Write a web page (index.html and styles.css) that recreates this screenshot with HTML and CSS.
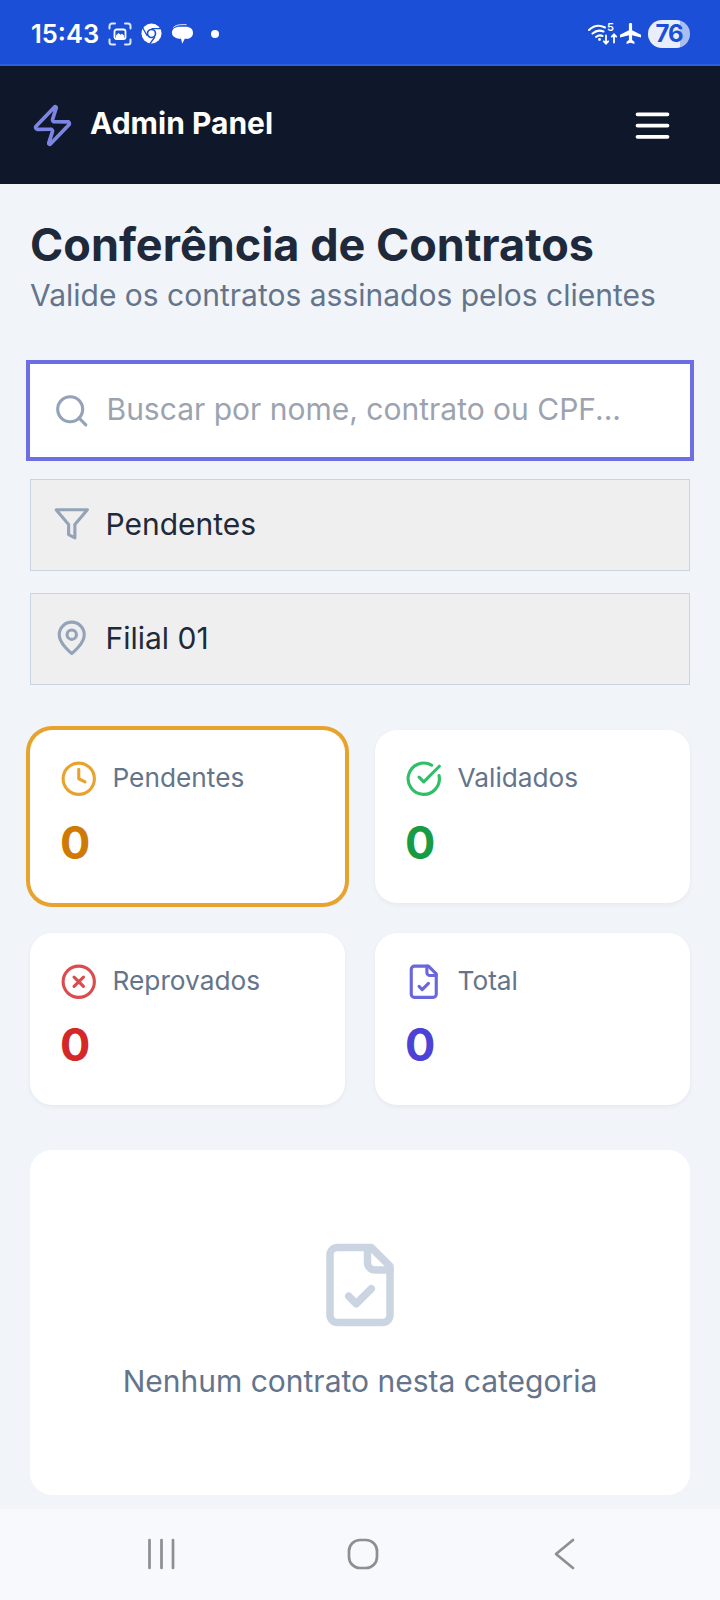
FILE: index.html
```html
<!DOCTYPE html>
<html lang="pt-BR">
<head>
<meta charset="utf-8">
<title>Conferência de Contratos</title>
<link rel="stylesheet" href="styles.css">
</head>
<body>
<div class="app">
  <div class="status">
    <div class="status-left">
      <span class="time">15:43</span>
      <svg class="si-frame" viewBox="0 0 24 24" fill="none" stroke-linecap="round"><path stroke="#dfe7fb" stroke-width="2" d="M1.500 6.500V4a2.500 2.500 0 0 1 2.500-2.500h3M17 1.500h3A2.500 2.500 0 0 1 22.500 4v2.500M22.500 17.500V20a2.500 2.500 0 0 1-2.500 2.500h-3M7 22.500H4A2.500 2.500 0 0 1 1.500 20v-2.500"/><rect x="6.500" y="7.500" width="11" height="9.500" rx="2" stroke="#fff" stroke-width="1.800"/><path fill="#fff" d="M8 16v-2.500l2.500-2.500 2 1.800 1.500-1 2 1.700V16z"/></svg>
      <svg class="si-chrome" viewBox="0 0 24 24" fill="none"><circle cx="12" cy="12" r="11.500" fill="#fff"/><circle cx="12" cy="12" r="5.500" fill="#1c4fd8"/><circle cx="12" cy="12" r="3.600" fill="#fff"/><path d="M12 6.500h10.500M7.200 14.800 2.200 6M15.800 16 10 24" stroke="#1c4fd8" stroke-width="1.500"/></svg>
      <svg class="si-bubble" viewBox="0 0 24 24"><path fill="#fff" d="M9 4h7c4.400 0 8 2.200 8 6.500s-3.300 6.800-7 6.800h-2l-2.800 5.200-1.200-5.300C6 17 1 15 1 10.500 1 6.500 4.500 4 9 4z"/><path fill="none" stroke="#fff" stroke-width=".9" d="M2.500 5C5 2.500 8 1.800 12 1.800h5"/></svg>
      <span class="dot"></span>
    </div>
    <div class="status-right">
      <div class="wifi">
        <svg class="si-wifi" viewBox="0 0 30 22" fill="none" stroke="#fff" stroke-linecap="round"><path stroke-width="2" d="M1 7c5-4.500 11-5 16-2.500M4.500 10.500c3.500-3 7.500-3.500 11-2M8 14c2-1.600 4.500-2 6.500-1"/><circle cx="11.500" cy="16.500" r="1.400" fill="#fff" stroke="none"/><path stroke-width="1.800" d="M18 12.500v8M15.800 18.300l2.200 2.300 2.200-2.300M26 19.500v-8M23.800 13.700l2.200-2.300 2.200 2.300"/></svg>
        <span class="wifi-five">5</span>
      </div>
      <svg class="si-plane" viewBox="0 0 24 24"><path fill="#fff" d="M13.800 1.500c0-1-.8-1.500-1.800-1.500s-1.800.5-1.800 1.500v6.700L0 13.500v3.200l10.200-2.700v5.300L7.500 21.500V24l4.500-1.300 4.500 1.300v-2.500l-2.700-2.200V14L24 16.700v-3.200l-10.200-5.300z"/></svg>
      <div class="battery"><span class="battery-num">76</span></div>
    </div>
  </div>

  <header class="topbar">
    <div class="brand">
      <svg class="ic-lg ic-zap" viewBox="0 0 24 24"><path d="M4 14a1 1 0 0 1-.78-1.630l9.900-10.200a.5.5 0 0 1 .86.460l-1.920 6.020A1 1 0 0 0 13 10h7a1 1 0 0 1 .78 1.630l-9.900 10.200a.5.5 0 0 1-.86-.460l1.920-6.020A1 1 0 0 0 11 14z"/></svg>
      <span class="brand-name">Admin Panel</span>
    </div>
    <svg class="ic-lg ic-menu" viewBox="0 0 24 24"><path d="M4 6h16M4 12h16M4 18h16"/></svg>
  </header>

  <main class="content">
    <h1 class="title">Conferência de Contratos</h1>
    <p class="subtitle">Valide os contratos assinados pelos clientes</p>

    <div class="field field-search">
      <svg class="ic ic-slate" viewBox="0 0 24 24"><circle cx="11" cy="11" r="8"/><path d="m21 21-4.350-4.350"/></svg>
      <span class="placeholder">Buscar por nome, contrato ou CPF...</span>
    </div>
    <div class="field field-select">
      <svg class="ic ic-slate" viewBox="0 0 24 24"><path d="M22 3H2l8 9.460V19l4 2v-8.540z"/></svg>
      <span>Pendentes</span>
    </div>
    <div class="field field-select">
      <svg class="ic ic-slate" viewBox="0 0 24 24"><path d="M20 10c0 6-8 12-8 12s-8-6-8-12a8 8 0 0 1 16 0z"/><circle cx="12" cy="10" r="3"/></svg>
      <span>Filial 01</span>
    </div>

    <section class="cards">
      <div class="card card-active">
        <div class="card-head">
          <svg class="ic ic-amber" viewBox="0 0 24 24"><circle cx="12" cy="12" r="10"/><path d="M12 6v6l4 2"/></svg>
          <span>Pendentes</span>
        </div>
        <div class="num num-amber">0</div>
      </div>
      <div class="card">
        <div class="card-head">
          <svg class="ic ic-green" viewBox="0 0 24 24"><path d="M21.800 10A10 10 0 1 1 17 3.340"/><path d="m9 11 3 3L22 4"/></svg>
          <span>Validados</span>
        </div>
        <div class="num num-green">0</div>
      </div>
      <div class="card">
        <div class="card-head">
          <svg class="ic ic-red" viewBox="0 0 24 24"><circle cx="12" cy="12" r="10"/><path d="m15 9-6 6M9 9l6 6"/></svg>
          <span>Reprovados</span>
        </div>
        <div class="num num-red">0</div>
      </div>
      <div class="card">
        <div class="card-head">
          <svg class="ic ic-indigo" viewBox="0 0 24 24"><path d="M15 2H6a2 2 0 0 0-2 2v16a2 2 0 0 0 2 2h12a2 2 0 0 0 2-2V7z"/><path d="M14 2v4a2 2 0 0 0 2 2h4"/><path d="m9 15 2 2 4-4"/></svg>
          <span>Total</span>
        </div>
        <div class="num num-indigo">0</div>
      </div>
    </section>

    <section class="empty">
      <svg class="ic-xl" viewBox="0 0 24 24"><path d="M15 2H6a2 2 0 0 0-2 2v16a2 2 0 0 0 2 2h12a2 2 0 0 0 2-2V7z"/><path d="M14 2v4a2 2 0 0 0 2 2h4"/><path d="m9 15 2 2 4-4"/></svg>
      <p class="empty-text">Nenhum contrato nesta categoria</p>
    </section>
  </main>

  <nav class="sysnav">
    <svg class="nav-ic" viewBox="0 0 40 32"><path d="M8.500 2v28M20.500 2v28M32 2v28"/></svg>
    <svg class="nav-ic" viewBox="0 0 40 32"><rect x="6" y="2" width="28" height="28" rx="11"/></svg>
    <svg class="nav-ic" viewBox="0 0 40 32"><path d="M29 2 12 16l17 14"/></svg>
  </nav>
</div>
</body>
</html>
```
FILE: styles.css
```css
* { box-sizing: border-box; }
html, body { margin: 0; padding: 0; }
body { font-family: Inter, "Liberation Sans", sans-serif; background: #f1f5f9; }
.app { width: 720px; height: 1600px; display: flex; flex-direction: column; overflow: hidden; background: #f1f5f9; }

.status { height: 66px; flex: none; background: #1c4fd8; border-bottom: 2px solid #2f5fdd; display: flex; align-items: center; justify-content: space-between; padding: 3px 30px 0 31px; color: #fff; }
.status-left, .status-right { display: flex; align-items: center; }
.time { font-size: 25.500px; font-weight: 600; width: 77px; }
.si-frame { width: 24px; height: 24px; }
.si-chrome { width: 21px; height: 21px; margin-left: 9px; }
.si-bubble { width: 22px; height: 22px; margin-left: 9px; }
.dot { width: 8px; height: 8px; border-radius: 50%; background: #fff; margin-left: 18px; }
.wifi { position: relative; width: 30px; height: 22px; }
.si-wifi { display: block; width: 30px; height: 22px; }
.wifi-five { position: absolute; left: 19px; top: -2px; font-size: 11px; line-height: 13px; font-weight: 600; color: #fff; }
.si-plane { width: 21px; height: 21px; margin-left: 2px; }
.battery { width: 42px; height: 28px; margin-left: 7px; border-radius: 14px; background: linear-gradient(90deg, #e9eefb 76%, #a9bdf0 76%); display: flex; align-items: center; justify-content: center; }
.battery-num { font-size: 24px; font-weight: 700; color: #1c4fd8; letter-spacing: -1px; }

.topbar { height: 118px; flex: none; background: #0f172a; display: flex; align-items: center; justify-content: space-between; padding: 0 45px 0 30px; }
.brand { display: flex; align-items: center; gap: 15px; }
.brand-name { font-size: 30px; font-weight: 700; color: #fff; margin-bottom: 4px; }
.ic-lg { width: 45px; height: 45px; fill: none; stroke-width: 2; stroke-linecap: round; stroke-linejoin: round; }
.ic-zap { stroke: #7c84e4; }
.ic-menu { stroke: #fff; }

.content { flex: 1; padding: 33px 30px 0; min-height: 0; }
.title { margin: 0; font-size: 45px; line-height: 55px; font-weight: 700; color: #1e293b; }
.subtitle { margin: 1px 0 46px; font-size: 30px; line-height: 45px; color: #64748b; }

.field { display: flex; align-items: center; gap: 16px; font-size: 30px; color: #1e293b; }
.field-search { height: 93px; padding: 0 23px; background: #fff; outline: 4px solid #6b6fe3; margin-bottom: 22px; }
.field-search .placeholder { margin-bottom: 3px; }
.field-select { height: 92px; padding: 0 22px; margin-bottom: 22px; background: #efefef; border: 1px solid #cbd5e1; gap: 15px; }
.field-select span { margin-bottom: 3px; }
.field-select .ic { margin-bottom: 2px; }
.placeholder { color: #9ca3af; }
.ic { width: 37.500px; height: 37.500px; flex: none; fill: none; stroke-width: 2; stroke-linecap: round; stroke-linejoin: round; }
.ic-slate { stroke: #94a3b8; }
.ic-amber { stroke: #e8a32e; }
.ic-green { stroke: #2fbf66; }
.ic-red { stroke: #dc4c4f; }
.ic-indigo { stroke: #6a66de; }

.cards { display: grid; grid-template-columns: 1fr 1fr; column-gap: 30px; row-gap: 30px; margin-top: 45px; }
.card { height: 172.500px; background: #fff; border-radius: 22px; padding: 30px; box-shadow: 0 2px 5px rgba(15, 23, 42, 0.05); }
.card-head { display: flex; align-items: center; gap: 15px; font-size: 26.250px; color: #64748b; }
.card-head span { margin-bottom: 2px; }
.card-active { box-shadow: 0 0 0 4px #e8a32e; }
.num { font-size: 45px; line-height: 66px; font-weight: 700; margin-top: 12px; }
.num-amber { color: #d07a06; }
.num-green { color: #179c46; }
.num-red { color: #d42828; }
.num-indigo { color: #4c43d6; }

.empty { height: 345px; margin-top: 45px; background: #fff; border-radius: 22px; display: flex; flex-direction: column; align-items: center; padding-top: 90px; }
.ic-xl { width: 90px; height: 90px; fill: none; stroke: #cbd5e1; stroke-width: 2; stroke-linecap: round; stroke-linejoin: round; }
.empty-text { margin: 29px 0 0; font-size: 30px; line-height: 45px; color: #64748b; }

.sysnav { height: 91px; flex: none; background: #f8f9fd; display: flex; align-items: center; justify-content: space-between; padding: 0 136px 2px 141px; }
.nav-ic { width: 40px; height: 32px; fill: none; stroke: #8e8e93; stroke-width: 2.700; stroke-linecap: round; stroke-linejoin: round; }
```
